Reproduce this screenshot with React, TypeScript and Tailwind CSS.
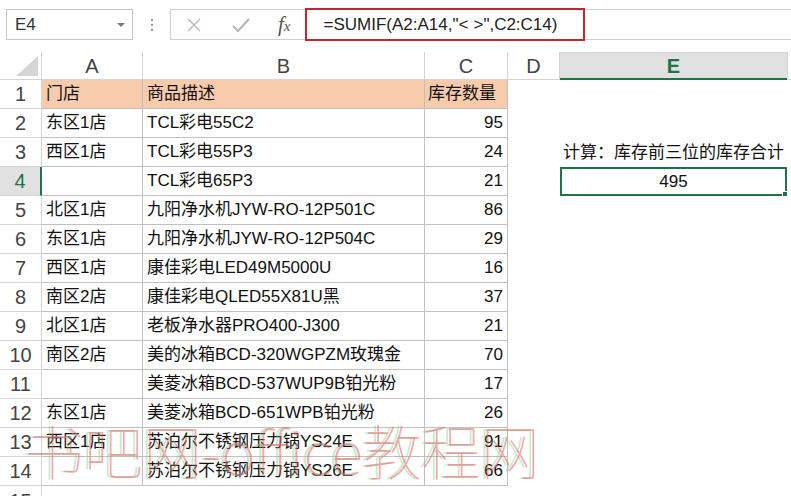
import React from 'react';

const font = { fontFamily: '"Liberation Sans", "Noto Sans CJK SC", sans-serif' };

const rows: [string, string, string][] = [
  ['门店', '商品描述', '库存数量'],
  ['东区1店', 'TCL彩电55C2', '95'],
  ['西区1店', 'TCL彩电55P3', '24'],
  ['', 'TCL彩电65P3', '21'],
  ['北区1店', '九阳净水机JYW-RO-12P501C', '86'],
  ['东区1店', '九阳净水机JYW-RO-12P504C', '29'],
  ['西区1店', '康佳彩电LED49M5000U', '16'],
  ['南区2店', '康佳彩电QLED55X81U黑', '37'],
  ['北区1店', '老板净水器PRO400-J300', '21'],
  ['南区2店', '美的冰箱BCD-320WGPZM玫瑰金', '70'],
  ['', '美菱冰箱BCD-537WUP9B铂光粉', '17'],
  ['东区1店', '美菱冰箱BCD-651WPB铂光粉', '26'],
  ['西区1店', '苏泊尔不锈钢压力锅YS24E', '91'],
  ['', '苏泊尔不锈钢压力锅YS26E', '66'],
];

function FormulaBar() {
  return (
    <div className="flex items-center h-[52px] pt-[9px] pb-[12px]">
      <div className="ml-[6px] w-[127px] h-[31px] border border-[#c6c6c6] flex items-center justify-between pl-[8px] pr-[7px]">
        <span className="text-[17px] text-[#333]">E4</span>
        <span className="w-0 h-0 border-l-[4px] border-r-[4px] border-t-[4px] border-l-transparent border-r-transparent border-t-[#777]" />
      </div>
      <div className="w-[37px] flex flex-col items-center gap-[3px]">
        <span className="w-[2px] h-[2px] bg-[#999]" />
        <span className="w-[2px] h-[2px] bg-[#999]" />
        <span className="w-[2px] h-[2px] bg-[#999]" />
      </div>
      <div className="flex-1 h-[31px] border-y border-l border-[#d0d0d0] flex items-center">
        <svg width="16" height="16" viewBox="0 0 16 16" className="ml-[15px]">
          <path d="M2 2 L14 14 M14 2 L2 14" stroke="#b5b5b5" strokeWidth="1.4" fill="none" />
        </svg>
        <svg width="20" height="16" viewBox="0 0 20 16" className="ml-[29px]">
          <path d="M2 9 L7 14 L18 2" stroke="#b5b5b5" strokeWidth="2" fill="none" />
        </svg>
        <span
          className="ml-[27px] text-[21px] italic text-[#555] leading-none"
          style={{ fontFamily: '"Liberation Serif", serif' }}
        >
          f<span className="text-[15px]">x</span>
        </span>
        <div className="ml-[14px] -my-[1px] h-[33px] w-[280px] border-2 border-[#c4262e] flex items-center pl-[17px] text-[17px] text-[#222]">
          =SUMIF(A2:A14,"&lt;<span className="ml-[5px]" />&gt;",C2:C14)
        </div>
      </div>
    </div>
  );
}

function ColHeaders() {
  const cols = [
    { label: 'A', w: 'w-[101px]' },
    { label: 'B', w: 'w-[282px]' },
    { label: 'C', w: 'w-[83px]' },
    { label: 'D', w: 'w-[52px]' },
  ];
  return (
    <div className="flex h-[28px] text-[20px] text-[#444]">
      <div className="w-[42px] border-r border-b border-[#d4d4d4] relative">
        <svg width="22" height="20" viewBox="0 0 22 20" className="absolute right-[3px] bottom-[3px]">
          <path d="M22 0 L22 20 L0 20 Z" fill="#d5d5d5" />
        </svg>
      </div>
      {cols.map((c) => (
        <div
          key={c.label}
          className={`${c.w} border-r border-b border-[#d4d4d4] flex items-center justify-center`}
        >
          {c.label}
        </div>
      ))}
      <div className="w-[227px] bg-[#e1e1e1] border-b-2 border-[#217346] border-t border-t-[#d4d4d4] flex items-center justify-center text-[#217346] font-bold">
        E
      </div>
      <div className="flex-1 border-l border-b border-[#d4d4d4]" />
    </div>
  );
}

export default function App() {
  return (
    <div className="w-[791px] h-[496px] bg-white overflow-hidden relative" style={font}>
      <FormulaBar />
      <ColHeaders />
      {rows.map((r, i) => {
        const n = i + 1;
        const active = n === 4;
        return (
          <div key={n} className="flex h-[29px] text-[17px] text-[#111]">
            <div
              className={
                active
                  ? 'w-[42px] bg-[#e1e1e1] border-b border-[#d4d4d4] border-r-2 border-r-[#217346] flex items-center justify-center text-[20px] text-[#217346]'
                  : 'w-[42px] border-b border-r border-[#d4d4d4] flex items-center justify-center text-[20px] text-[#444]'
              }
            >
              {n}
            </div>
            <div
              className={`w-[101px] border-r border-b border-[#c0c0c0] flex items-center pl-[4px] ${
                n === 1 ? 'bg-[#f8cbad]' : ''
              }`}
            >
              {r[0]}
            </div>
            <div
              className={`w-[282px] border-r border-b border-[#c0c0c0] flex items-center pl-[4px] whitespace-nowrap ${
                n === 1 ? 'bg-[#f8cbad]' : ''
              }`}
            >
              {r[1]}
            </div>
            <div
              className={`w-[83px] border-r border-b border-[#c0c0c0] flex items-center ${
                n === 1 ? 'bg-[#f8cbad] pl-[3px]' : 'justify-end pr-[4px]'
              }`}
            >
              {r[2]}
            </div>
            <div className="w-[52px]" />
            {n === 3 && (
              <div className="w-[227px] flex items-center justify-center whitespace-nowrap">
                计算：库存前三位的库存合计
              </div>
            )}
            {n === 4 && (
              <div className="w-[227px] border-2 border-[#217346] flex items-center justify-center relative">
                495
                <span className="absolute -right-[3px] -bottom-[3px] w-[6px] h-[6px] bg-[#217346] border border-white" />
              </div>
            )}
          </div>
        );
      })}
      <div className="flex h-[29px]">
        <div className="w-[42px] border-r border-[#d4d4d4] flex items-center justify-center text-[20px] text-[#444]">
          15
        </div>
      </div>
      <div
        className="absolute left-[25px] top-[420px] text-[59px] leading-none whitespace-nowrap pointer-events-none font-thin text-[rgba(236,100,100,0.55)]"
        style={{
          fontFamily: '"Noto Sans CJK SC", sans-serif',
          textShadow: '-3px 0 0 rgba(120,205,140,0.4)',
        }}
      >
        书吧网-office教程网
      </div>
    </div>
  );
}
